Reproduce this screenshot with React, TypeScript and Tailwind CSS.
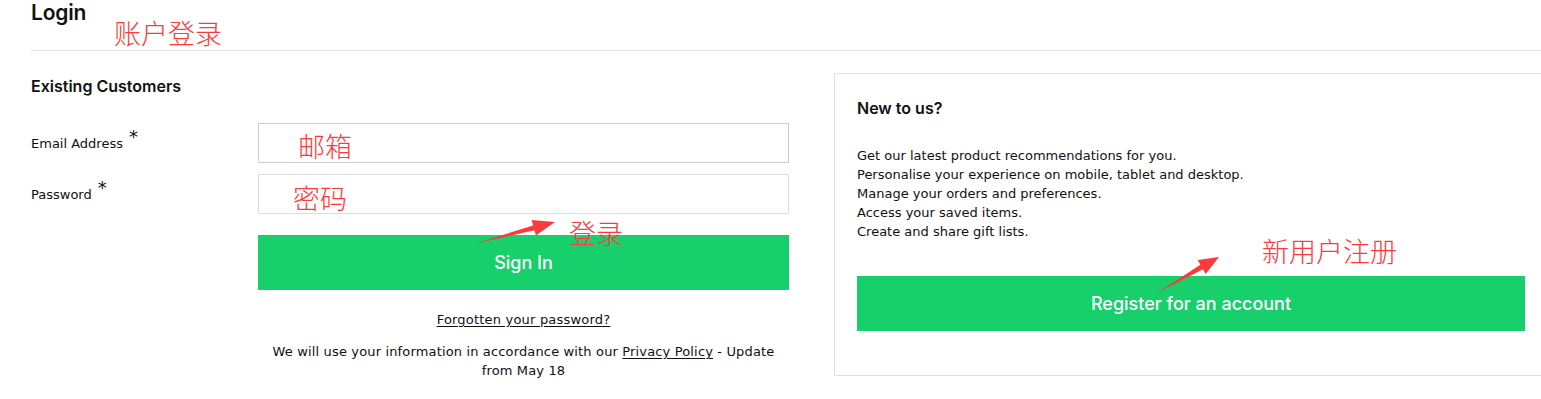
const perks = [
  'Get our latest product recommendations for you.',
  'Personalise your experience on mobile, tablet and desktop.',
  'Manage your orders and preferences.',
  'Access your saved items.',
  'Create and share gift lists.',
];

const notes = [
  { text: '账户登录', className: 'left-[114px] top-[19px]' },
  { text: '邮箱', className: 'left-[298px] top-[132px]' },
  { text: '密码', className: 'left-[293px] top-[184px]' },
  { text: '登录', className: 'left-[569px] top-[219px]' },
  { text: '新用户注册', className: 'left-[1262px] top-[237px]' },
];

function Field({ label, tone }: { label: string; tone: string }) {
  return (
    <div className="flex items-center">
      <label className="w-[227px] text-[13px] text-[#111]">
        {label}
        <span className="relative -top-[5px] ml-[6px] text-[18px] leading-none">*</span>
      </label>
      <input className={`h-[40px] w-[531px] border bg-white ${tone}`} />
    </div>
  );
}

export default function App() {
  return (
    <div className="relative h-[399px] w-full overflow-hidden bg-white pl-[31px] font-['DejaVu_Sans',sans-serif]">
      <div className="w-[1517px]">
        <div className="h-[51px] border-b border-[#e0e0e0]">
          <h1 className="font-['Inter',sans-serif] text-[21px] font-semibold leading-[25px] tracking-[-0.2px] text-[#111]">
            Login
          </h1>
        </div>

        <div className="flex gap-[45px]">
          <div className="w-[758px] pt-[25px]">
            <h2 className="font-['Inter',sans-serif] text-[16px] font-semibold leading-[20px] text-[#111]">
              Existing Customers
            </h2>
            <div className="mt-[27px] flex flex-col gap-[11px]">
              <Field label="Email Address" tone="border-[#cccccc]" />
              <Field label="Password" tone="border-[#dddddd]" />
            </div>
            <div className="ml-[227px] w-[531px]">
              <button className="mt-[21px] h-[55px] w-full bg-[#17cf6b] font-['Inter',sans-serif] text-[18px] font-medium text-white">
                Sign In
              </button>
              <p className="mt-[20px] text-center text-[13px] leading-[19px] tracking-[0.2px] text-[#111]">
                <a className="underline underline-offset-2">Forgotten your password?</a>
              </p>
              <p className="mt-[13px] px-[8px] text-center text-[13px] leading-[19px] tracking-[0.15px] text-[#111]">
                We will use your information in accordance with our{' '}
                <a className="underline underline-offset-2">Privacy Policy</a> - Update from May 18
              </p>
            </div>
          </div>

          <div className="mt-[22px] h-[303px] w-[714px] border border-[#e0e0e0] px-[22px] pt-[24px]">
            <h2 className="font-['Inter',sans-serif] text-[16px] font-semibold leading-[20px] text-[#111]">
              New to us?
            </h2>
            <ul className="mt-[28px] text-[13px] leading-[19px] text-[#111]">
              {perks.map((perk) => (
                <li key={perk}>{perk}</li>
              ))}
            </ul>
            <button className="mt-[35px] h-[55px] w-[668px] bg-[#17cf6b] font-['Inter',sans-serif] text-[18px] font-medium text-white">
              Register for an account
            </button>
          </div>
        </div>
      </div>

      {notes.map((note) => (
        <span
          key={note.text}
          className={`pointer-events-none absolute font-['Noto_Sans_CJK_SC',sans-serif] text-[27px] font-light leading-none text-[#fb3b3b] ${note.className}`}
        >
          {note.text}
        </span>
      ))}

      <svg className="pointer-events-none absolute left-0 top-0" width="1541" height="399">
        <polygon
          fill="#fb3b3b"
          points="474,244 534.5,230.2 535.9,235.5 555,222 531.7,220.1 533.1,225.4"
        />
        <polygon
          fill="#fb3b3b"
          points="1157,293 1203,269.2 1205.7,273.9 1219,257 1197.7,260.1 1200.4,264.8"
        />
      </svg>
    </div>
  );
}
